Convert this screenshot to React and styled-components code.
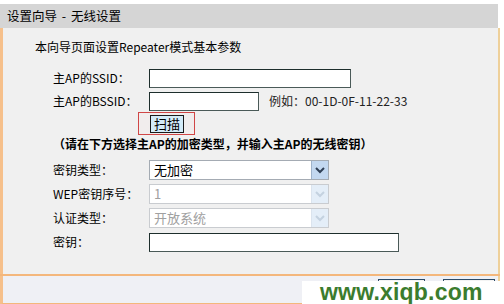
import React from 'react';
import styled, { createGlobalStyle } from 'styled-components';

const GlobalStyle = createGlobalStyle`
  html, body {
    margin: 0;
    padding: 0;
    background: #ffffff;
  }
  body {
    font-family: "Noto Sans CJK SC", "DejaVu Sans", sans-serif;
    font-size: 12px;
    color: #000;
  }
`;

const Page = styled.div`
  position: relative;
  width: 504px;
  height: 304px;
  overflow: hidden;
  padding-top: 4px;
  box-sizing: border-box;
`;

const Frame = styled.div`
  width: 500px;
`;

const TitleBar = styled.div`
  height: 24px;
  background: #d5d5d5;
  padding-left: 7px;
  display: flex;
  align-items: center;
  font-size: 12.5px;
  line-height: 14px;
  word-spacing: 2px;
  width: 498px;
  box-sizing: border-box;
`;

const Content = styled.div`
  height: 246px;
  background: #f0f0f0;
  border-left: 3px solid #f6c08b;
  border-right: 2px solid #eed09a;
  box-sizing: border-box;
  padding-top: 12px;
`;

const Intro = styled.div`
  padding-left: 32px;
  line-height: 14px;
  height: 14px;
  margin-bottom: 12px;
`;

const Row = styled.div`
  display: grid;
  grid-template-columns: 96px auto;
  align-items: center;
  height: ${(p) => p.h || 24}px;
  padding-left: 50px;
  margin-top: ${(p) => p.mt || 0}px;
  line-height: 14px;
`;

const Label = styled.span`
  white-space: nowrap;
`;

const Field = styled.div`
  display: flex;
  align-items: center;
  gap: 10px;
`;

const TextInput = styled.div`
  width: ${(p) => p.w}px;
  height: 19px;
  box-sizing: border-box;
  background: #fff;
  border: 1px solid #1d2e2c;
  border-right-color: #4a5a58;
  border-bottom-color: #4a5a58;
`;

const Hint = styled.span`
  color: #222;
  white-space: nowrap;
`;

const ScanMark = styled.div`
  margin-left: -11px;
  width: 57px;
  height: 23px;
  box-sizing: border-box;
  border: 1px solid #d04646;
  background: #f1eded;
  display: flex;
  align-items: center;
  padding-left: 11px;
`;

const ScanButton = styled.div`
  width: 34px;
  height: 18px;
  box-sizing: border-box;
  border: 1px solid #1a1a1a;
  background: #d3ebf8;
  font-size: 13px;
  line-height: 16px;
  text-align: center;
`;

const Note = styled.div`
  height: 18px;
  display: flex;
  align-items: center;
  padding-left: 50px;
  font-weight: bold;
  line-height: 14px;
`;

const Select = styled.div`
  width: 180px;
  height: 20px;
  box-sizing: border-box;
  background: #fff;
  border: 1px solid ${(p) => (p.disabled ? '#c9ccd0' : '#a4abb3')};
  display: flex;
  align-items: stretch;
  color: ${(p) => (p.disabled ? '#a0a0a0' : '#000')};
`;

const SelectText = styled.div`
  flex: 1;
  padding-left: 4px;
  display: flex;
  align-items: center;
  font-size: 13px;
`;

const Arrow = styled.div`
  width: 16px;
  background: ${(p) => (p.disabled ? '#e4eef8' : '#c3d8f0')};
  border-left: 1px solid ${(p) => (p.disabled ? '#dbe4ee' : '#9fb3cb')};
  display: flex;
  align-items: center;
  justify-content: center;
`;

const Divider = styled.div`
  height: 2px;
  background: #f4b77c;
`;

const Footer = styled.div`
  height: 24px;
  background: #eff0f5;
  border-left: 3px solid #f6c08b;
  border-right: 2px solid #eed09a;
  border-bottom: 2px solid #f4b77c;
  display: flex;
  justify-content: flex-end;
  align-items: flex-start;
  gap: 18px;
  padding-top: 3px;
  padding-right: 3px;
`;

const FooterButton = styled.div`
  width: ${(p) => p.w}px;
  height: 22px;
  box-sizing: border-box;
  border: 1px solid #2c4a66;
  background: #f4f4f4;
`;

const Watermark = styled.div`
  position: absolute;
  left: 302px;
  top: 281px;
  width: 202px;
  height: 23px;
  background: #ffffff;
  color: #3b7c2e;
  font-family: "Liberation Sans", Arial, sans-serif;
  font-weight: bold;
  font-size: 23px;
  line-height: 23px;
  padding-left: 18px;
  box-sizing: border-box;
  letter-spacing: 0.2px;
`;

const Chevron = ({ faded }) => (
  <svg width="10" height="7" viewBox="0 0 10 7">
    <path
      d="M1 1 L5 5 L9 1"
      fill="none"
      stroke={faded ? '#c4d2e0' : '#2f3f55'}
      strokeWidth="2"
    />
  </svg>
);

const Dropdown = ({ value, disabled }) => (
  <Select disabled={disabled}>
    <SelectText>{value}</SelectText>
    <Arrow disabled={disabled}>
      <Chevron faded={disabled} />
    </Arrow>
  </Select>
);

const App = () => (
  <Page>
    <GlobalStyle />
    <Frame>
      <TitleBar>设置向导 - 无线设置</TitleBar>
      <Content>
        <Intro>本向导页面设置Repeater模式基本参数</Intro>
        <Row>
          <Label>主AP的SSID：</Label>
          <TextInput w={202} />
        </Row>
        <Row h={22}>
          <Label>主AP的BSSID：</Label>
          <Field>
            <TextInput w={110} />
            <Hint>例如：00-1D-0F-11-22-33</Hint>
          </Field>
        </Row>
        <Row h={23}>
          <span />
          <ScanMark>
            <ScanButton>扫描</ScanButton>
          </ScanMark>
        </Row>
        <Note>（请在下方选择主AP的加密类型，并输入主AP的无线密钥）</Note>
        <Row mt={5}>
          <Label>密钥类型：</Label>
          <Dropdown value="无加密" />
        </Row>
        <Row>
          <Label>WEP密钥序号：</Label>
          <Dropdown value="1" disabled />
        </Row>
        <Row>
          <Label>认证类型：</Label>
          <Dropdown value="开放系统" disabled />
        </Row>
        <Row>
          <Label>密钥：</Label>
          <TextInput w={250} />
        </Row>
      </Content>
      <Divider />
      <Footer>
        <FooterButton w={47} />
        <FooterButton w={52} />
      </Footer>
    </Frame>
    <Watermark>www.xiqb.com</Watermark>
  </Page>
);

export default App;
